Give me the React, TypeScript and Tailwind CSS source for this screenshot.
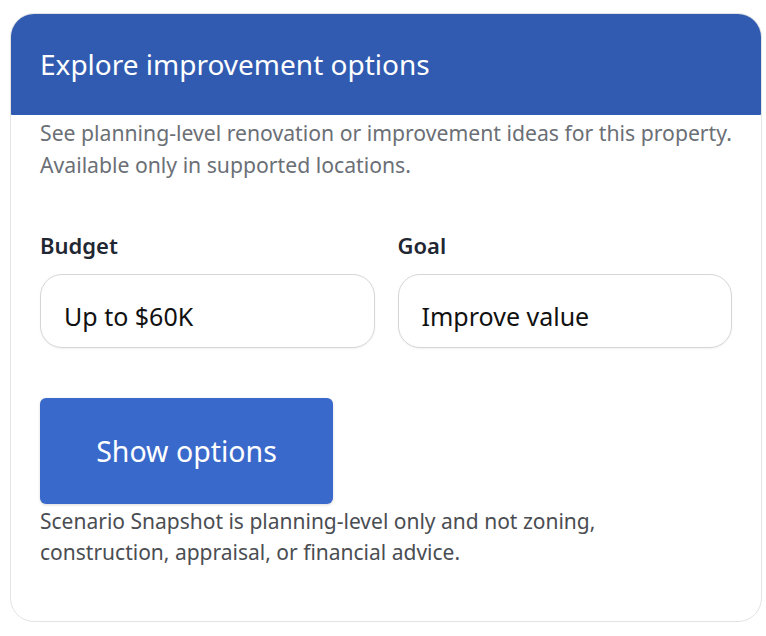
import React from "react";

export default function App() {
  return (
    <div className="min-h-screen bg-white pt-[13px] pl-[10px]" style={{ fontFamily: '"Noto Sans", "Open Sans", sans-serif' }}>
      <div className="w-[752px] h-[609px] rounded-[24px] border border-[#e3e3e3] bg-white overflow-hidden">
        <div className="h-[102px] bg-[#305bb1] rounded-t-[24px] rounded-b-[3px] flex items-center px-[30px] -mx-px -mt-px">
          <h1 className="text-white text-[28px] leading-none">Explore improvement options</h1>
        </div>
        <div className="px-[29px]">
          <p className="mt-[2px] text-[21.2px] leading-[32px] text-[#6b6f76] whitespace-nowrap">
            See planning-level renovation or improvement ideas for this property.
            <br />
            Available only in supported locations.
          </p>
          <div className="mt-[51px] grid grid-cols-2 gap-[23px] w-[692px]">
            <div>
              <div className="text-[22px] font-semibold text-[#1f2733] leading-[26px]">Budget</div>
              <div className="mt-[16px] h-[74px] rounded-[22px] border border-[#d6d6d6] shadow-[0_1px_2px_rgba(0,0,0,0.06)] flex items-center pt-[11px] px-[23px] text-[25px] text-[#111]">
                Up to $60K
              </div>
            </div>
            <div>
              <div className="text-[22px] font-semibold text-[#1f2733] leading-[26px]">Goal</div>
              <div className="mt-[16px] h-[74px] rounded-[22px] border border-[#d6d6d6] shadow-[0_1px_2px_rgba(0,0,0,0.06)] flex items-center pt-[11px] px-[23px] text-[25px] text-[#111]">
                Improve value
              </div>
            </div>
          </div>
          <button className="mt-[50px] w-[293px] h-[106px] rounded-[6px] bg-[#3a69cc] text-white text-[28.5px] shadow-[0_1px_3px_rgba(0,0,0,0.15)] flex items-center justify-center">
            Show options
          </button>
          <p className="mt-[2px] text-[21px] leading-[31px] text-[#4a4d52] whitespace-nowrap">
            Scenario Snapshot is planning-level only and not zoning,
            <br />
            construction, appraisal, or financial advice.
          </p>
        </div>
      </div>
    </div>
  );
}
